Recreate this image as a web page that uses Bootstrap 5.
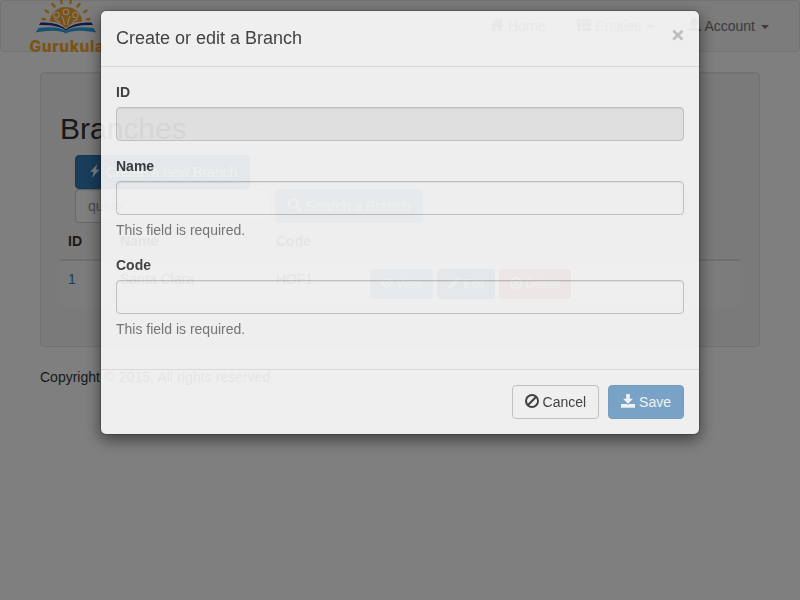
<!DOCTYPE html>
<html lang="en">
<head>
<meta charset="utf-8">
<meta name="viewport" content="width=device-width, initial-scale=1">
<title>Branches</title>
<link rel="stylesheet" href="https://cdn.jsdelivr.net/npm/bootstrap@5.3.0/dist/css/bootstrap.min.css">
<style>
  body { font: 14px/1.42857 "Liberation Sans", Arial, sans-serif; color: #333; overflow: hidden; height: 600px; background: #fff; }
  .btn, .form-control { font-size: 14px; line-height: 20px; padding: 6px 12px; border-radius: 4px; }
  .btn-xs-row .btn { font-size: 12px; line-height: 18px; padding: 5px 10px; border-radius: 3px; }
  .glyph { width: 1em; height: 1em; fill: currentColor; vertical-align: -1px; display: inline-block; }
  .site-nav { height: 52px; background: #f8f8f8; border: 1px solid #e7e7e7; border-radius: 4px; margin-bottom: 20px; padding: 0 15px; }
  .site-nav .nav-link { color: #777; padding: 15px; line-height: 20px; font-size: 14px; }
  .site-nav .nav-link:not(:last-child) { margin-right: 2px; }
  .site-nav .dropdown-toggle::after { border-top: 4px solid; border-left: 4px solid transparent; border-right: 4px solid transparent; margin-left: 6px; vertical-align: 2px; }
  .logo { width: 80px; height: 56px; margin: -1px 0 0 13px; overflow: visible; }
  .page { margin: 0 40px; }
  .well { background: #f5f5f5; border: 1px solid #e3e3e3; border-radius: 4px; height: 275px; padding: 19px; margin-bottom: 21px; box-shadow: inset 0 1px 1px rgba(0,0,0,.05); }
  .well h2 { font-size: 30px; font-weight: 400; line-height: 33px; margin: 20px 0 10px; }
  .tools { padding: 0 15px; }
  .btn-primary { --bs-btn-bg: #337ab7; --bs-btn-border-color: #2e6da4; --bs-btn-disabled-bg: #337ab7; --bs-btn-disabled-border-color: #2e6da4; }
  .btn-info { --bs-btn-color: #fff; --bs-btn-bg: #5ba8d6; --bs-btn-border-color: #5ba8d6; }
  .btn-danger { --bs-btn-bg: #d9534f; --bs-btn-border-color: #d9534f; }
  .form-control { border-color: #ccc; color: #555; height: 34px; box-shadow: inset 0 1px 1px rgba(0,0,0,.075); }
  .form-control::placeholder { color: #999; }
  .query { width: 196px; }
  .branches { --bs-table-bg: transparent; color: #333; margin: 0; }
  .branches th, .branches td { padding: 8px; line-height: 20px; border: 0; color: #333; }
  .branches thead th { border-bottom: 2px solid #ddd; }
  .branches tbody td { background: #f9f9f9; box-shadow: none; }
  .branches a { color: #337ab7; text-decoration: none; }
  .copyright { word-spacing: .4px; }
  .modal-backdrop { opacity: .5; }
  .modal-dialog { width: 600px; max-width: 600px; margin: 10px auto; }
  .modal-content { border: 1px solid rgba(0,0,0,.2); border-radius: 6px; box-shadow: 0 5px 15px rgba(0,0,0,.55); color: #3b3b3b; background: #fcfcfc; background-clip: padding-box; }
  .edit-modal { opacity: .9; }
  .modal-header { height: 56px; padding: 15px; border-bottom: 1px solid #e2e2e2; }
  .modal-title { font-size: 18px; font-weight: 400; line-height: 25px; }
  .modal-body { padding: 15px; height: 302px; }
  .modal-body label { font-weight: 700; margin-bottom: 5px; line-height: 20px; display: block; }
  .modal-body .form-control { background: #fcfcfc; border-color: #c8c8c8; }
  .modal-body .form-control[readonly] { background: #ebebeb; }
  .field { margin-bottom: 15px; }
  .help { color: #757575; margin: 5px 0 0; line-height: 20px; }
  .modal-footer { padding: 15px; gap: 9px; border-top: 1px solid #e2e2e2; }
  .modal-footer > * { margin: 0; }
  .btn-cancel { --bs-btn-color: #3b3b3b; --bs-btn-border-color: #c8c8c8; --bs-btn-bg: #fcfcfc; }
  .close-x { border: 0; background: none; padding: 0; font-size: 21px; font-weight: 700; line-height: 21px; color: #000; opacity: .22; height: 21px; margin-top: -2px; text-shadow: 0 1px 0 #fff; -webkit-text-stroke: .4px #000; }
</style>
</head>
<body>
<svg class="d-none" xmlns="http://www.w3.org/2000/svg">
  <symbol id="home" viewBox="0 0 14 14"><path d="M7 0 0 7.400h2V13h3.600V9h2.800v4H12V7.400h2L11.600 4.900V1H9.800v2z"/></symbol>
  <symbol id="list" viewBox="0 0 14 14"><path d="M0 1h4v3.300H0zM5 1h9v3.300H5zM0 5.300h4v3.300H0zM5 5.300h9v3.300H5zM0 9.600h4V13H0zM5 9.600h9V13H5z"/></symbol>
  <symbol id="user" viewBox="0 0 14 14"><path d="M7 0C4.700 0 3.600 1.700 3.600 4c0 1.700.7 3.200 1.700 4v1.200L1 11.300c-.7.4-1 1-1 1.700h14c0-.7-.3-1.300-1-1.700L8.700 9.200V8c1-.8 1.700-2.300 1.700-4C10.400 1.700 9.300 0 7 0z"/></symbol>
  <symbol id="flash" viewBox="0 0 14 14"><path d="M9.500 0 2.300 7.700h3.500L4 14l7.500-8.400H7.800z"/></symbol>
  <symbol id="search" viewBox="0 0 14 14"><path fill-rule="evenodd" d="M5.500 0a5.500 5.500 0 1 0 2.900 10.200l3.400 3.500 1.900-1.900-3.500-3.400A5.500 5.500 0 0 0 5.500 0zm0 2a3.500 3.500 0 1 1 0 7 3.500 3.500 0 0 1 0-7z"/></symbol>
  <symbol id="eye" viewBox="0 0 14 14"><path fill-rule="evenodd" d="M7 2C3.500 2 1.200 4.500 0 7c1.200 2.500 3.500 5 7 5s5.800-2.500 7-5c-1.200-2.500-3.500-5-7-5zm0 1.400a3.600 3.600 0 1 1 0 7.200 3.600 3.600 0 0 1 0-7.200zM7 5a2 2 0 1 0 2 2c-1 .4-2-.8-2-2z"/></symbol>
  <symbol id="pencil" viewBox="0 0 14 14"><path d="M11.300 0 14 2.700l-1.600 1.600-2.700-2.700zM9 2.300 11.700 5 4.500 12.200 0 14l1.800-4.500z"/></symbol>
  <symbol id="remove" viewBox="0 0 14 14"><path fill-rule="evenodd" d="M7 0a7 7 0 1 0 0 14A7 7 0 0 0 7 0zm0 2a5 5 0 1 1 0 10A5 5 0 0 1 7 2zM5 3.700 3.700 5l2 2-2 2L5 10.300l2-2 2 2L10.300 9l-2-2 2-2L9 3.700l-2 2z"/></symbol>
  <symbol id="ban" viewBox="0 0 14 14"><path fill-rule="evenodd" d="M7 0a7 7 0 1 0 0 14A7 7 0 0 0 7 0zM7 2c1 0 1.900.3 2.700.8L2.800 9.700A5 5 0 0 1 7 2zm4.200 2.300A5 5 0 0 1 4.300 11.200z"/></symbol>
  <symbol id="save" viewBox="0 0 14 14"><path d="M5.200 0h3.600v4.700H12L7 9.700 2 4.700h3.200zM0 10h6l1 1 1-1h6v3.800H0z"/></symbol>
</svg>

<nav class="site-nav d-flex justify-content-between">
  <svg class="logo" viewBox="0 0 80 56">
    <g stroke="#f9a72b" stroke-width="2.400" stroke-linecap="round">
      <path d="M13.500 19l2.500.4M16.500 10.500l2.500 1.700M23.500 4l2 2.600M32 0l.6 3M42 0l-.6 3M50.500 4l-2 2.600M57.500 10.500l-2.500 1.700M60.500 19l-2.500.4"/>
    </g>
    <path d="M21 21.500a16 14.500 0 0 1 32 0q-10.500 0-16 7Q31.500 21.500 21 21.500z" fill="#f9a72b"/>
    <g fill="#f9a72b" stroke="#fff" stroke-width="1.100"><circle cx="27.500" cy="15" r="2.700"/><circle cx="37" cy="12" r="2.700"/><circle cx="46.500" cy="15" r="2.700"/><path fill="none" d="M25 19q4 1 5.500 4M49 19q-4 1-5.500 4M33 16q2 4 2.500 9M41 16q-2 4-2.500 9"/></g>
    <path d="M11.500 22.500Q29 21.500 37 29.500 45 21.500 62.500 22.500l1.500 2.500Q44 24.500 37 30.800 30 24.500 10 25z" fill="#2c2f92"/>
    <path d="M9.500 28Q30 25.500 37 31 44 25.500 64.500 28l3 4.500Q45 28.500 37 33.500 29 28.500 6.500 32.500z" fill="#2ea7e0"/>
    <text x="0.500" y="52.300" textLength="74.500" font-family="Inter, sans-serif" font-weight="800" font-size="15.500" fill="#f9a72b">Gurukula</text>
  </svg>
  <div class="nav flex-nowrap">
    <a class="nav-link" href="#"><svg class="glyph"><use href="#home"/></svg> Home</a>
    <a class="nav-link dropdown-toggle" href="#"><svg class="glyph"><use href="#list"/></svg> Entities</a>
    <a class="nav-link dropdown-toggle" href="#"><svg class="glyph"><use href="#user"/></svg> Account</a>
  </div>
</nav>

<main class="page">
  <section class="well">
    <h2>Branches</h2>
    <div class="tools">
      <button class="btn btn-primary d-block"><svg class="glyph"><use href="#flash"/></svg> Create a new Branch</button>
      <div class="d-flex gap-1">
        <input class="form-control query" placeholder="query">
        <button class="btn btn-info"><svg class="glyph"><use href="#search"/></svg> Search a Branch</button>
      </div>
    </div>
    <table class="table branches">
      <colgroup><col style="width:52px"><col style="width:156px"><col style="width:94px"><col></colgroup>
      <thead><tr><th>ID</th><th>Name</th><th>Code</th><th></th></tr></thead>
      <tbody><tr><td><a href="#">1</a></td><td>Santa Clara</td><td>HOF1</td>
        <td><div class="btn-xs-row d-flex gap-1">
          <button class="btn btn-info"><svg class="glyph"><use href="#eye"/></svg> View</button>
          <button class="btn btn-primary"><svg class="glyph"><use href="#pencil"/></svg> Edit</button>
          <button class="btn btn-danger"><svg class="glyph"><use href="#remove"/></svg> Delete</button>
        </div></td></tr></tbody>
    </table>
  </section>
  <footer class="copyright">Copyright © 2015. All rights reserved</footer>
</main>

<div class="modal-backdrop"></div>
<div class="modal d-block edit-modal" tabindex="-1">
  <div class="modal-dialog">
    <div class="modal-content">
      <div class="modal-header align-items-start">
        <h4 class="modal-title">Create or edit a Branch</h4>
        <button class="close-x" aria-label="Close">×</button>
      </div>
      <div class="modal-body">
        <div class="field"><label for="fid">ID</label><input id="fid" class="form-control" readonly></div>
        <div class="field"><label for="fname">Name</label><input id="fname" class="form-control"><p class="help">This field is required.</p></div>
        <div class="field"><label for="fcode">Code</label><input id="fcode" class="form-control"><p class="help">This field is required.</p></div>
      </div>
      <div class="modal-footer">
        <button class="btn btn-cancel"><svg class="glyph"><use href="#ban"/></svg> Cancel</button>
        <button class="btn btn-primary" disabled><svg class="glyph"><use href="#save"/></svg> Save</button>
      </div>
    </div>
  </div>
</div>
<script src="https://cdn.jsdelivr.net/npm/bootstrap@5.3.0/dist/js/bootstrap.bundle.min.js"></script>
</body>
</html>
